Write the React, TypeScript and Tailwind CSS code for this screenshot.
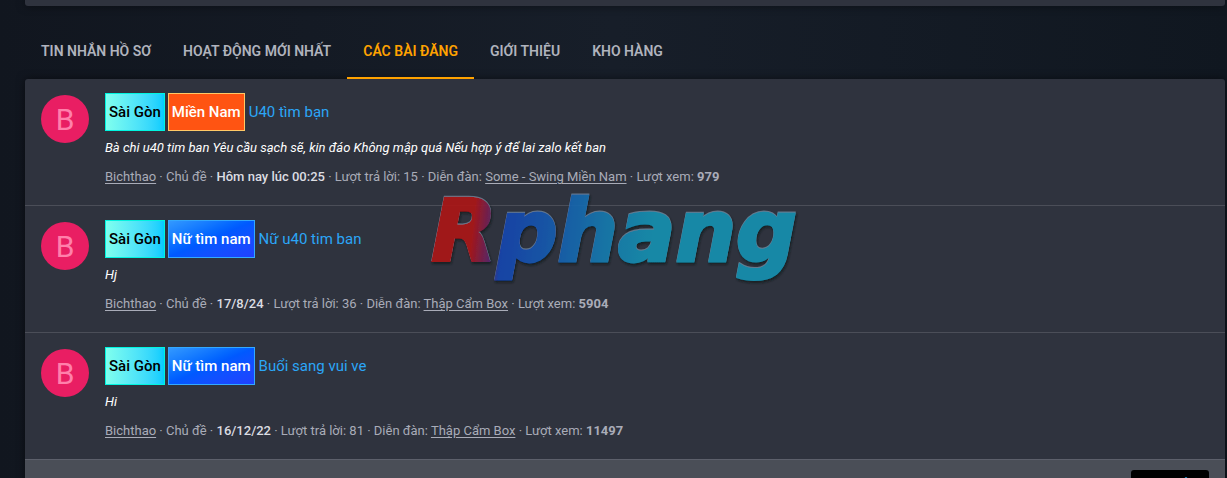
import { ChevronUp } from "lucide-react";

const tabs = [
  { label: "Tin nhắn hồ sơ", active: false },
  { label: "Hoạt động mới nhất", active: false },
  { label: "Các bài đăng", active: true },
  { label: "Giới thiệu", active: false },
  { label: "Kho hàng", active: false },
];

const prefixMap: Record<string, string> = {
  "Sài Gòn": "border-[#00f5e0] bg-linear-to-r from-[#7fffee] to-[#00ccff] text-black",
  "Miền Nam": "border-[#ffc966] bg-[#ff5412] text-white",
  "Nữ tìm nam": "border-[#33a9ff] bg-linear-to-br from-[#3399ff] via-[#0059ff] to-[#2040ff] text-white",
};

const posts = [
  {
    prefixes: ["Sài Gòn", "Miền Nam"],
    title: "U40 tìm bạn",
    snippet: "Bà chi u40 tim ban Yêu cầu sạch sẽ, kin đáo Không mập quá Nếu hợp ý để lai zalo kết ban",
    date: "Hôm nay lúc 00:25",
    replies: 15,
    forum: "Some - Swing Miền Nam",
    views: 979,
  },
  {
    prefixes: ["Sài Gòn", "Nữ tìm nam"],
    title: "Nữ u40 tim ban",
    snippet: "Hj",
    date: "17/8/24",
    replies: 36,
    forum: "Thập Cẩm Box",
    views: 5904,
  },
  {
    prefixes: ["Sài Gòn", "Nữ tìm nam"],
    title: "Buổi sang vui ve",
    snippet: "Hi",
    date: "16/12/22",
    replies: 81,
    forum: "Thập Cẩm Box",
    views: 11497,
  },
];

function Watermark() {
  return (
    <div className="fixed inset-0 flex items-center justify-center pointer-events-none">
      <svg width="400" height="160" viewBox="0 0 400 160" role="img" aria-label="Rphang" className="opacity-90">
        <defs>
          <linearGradient id="brand" gradientUnits="userSpaceOnUse" x1="10" y1="60" x2="390" y2="100">
            <stop offset="0.13" stopColor="#ad1519" />
            <stop offset="0.18" stopColor="#5f2468" />
            <stop offset="0.21" stopColor="#1545b0" />
            <stop offset="0.36" stopColor="#1560b0" />
            <stop offset="0.5" stopColor="#1480b0" />
            <stop offset="0.6" stopColor="#1592b2" />
          </linearGradient>
          <filter id="bevel" x="-5%" y="-10%" width="110%" height="125%">
            <feDropShadow dx="0" dy="-1" stdDeviation="0" floodColor="#7793a8" floodOpacity="0.8" />
            <feDropShadow dx="1" dy="2" stdDeviation="1" floodColor="#10141c" floodOpacity="0.8" />
          </filter>
        </defs>
        <text
          x="200"
          y="102"
          fontFamily="'DejaVu Sans', sans-serif"
          fontWeight="700"
          fontStyle="italic"
          fontSize="85"
          textAnchor="middle"
          fill="url(#brand)"
          stroke="url(#brand)"
          strokeWidth="3"
          filter="url(#bevel)"
        >
          Rphang
        </text>
      </svg>
    </div>
  );
}

function PostRow({ post }: { post: (typeof posts)[number] }) {
  return (
    <li className="flex gap-4 px-4 pt-3.5 pb-[18px] border-b border-[#4b4e58] last:border-[#5d606b]">
      <a href="#bichthao" className="flex items-center justify-center shrink-0 w-12 h-12 mt-0.5 rounded-full bg-[#e91e63] text-[#ff80ab] text-[30px]">
        B
      </a>
      <div className="min-w-0">
        <h3 className="flex flex-wrap items-center text-[15px] leading-5">
          {post.prefixes.map((prefix) => (
            <span key={prefix} className={`mr-[3px] px-[3px] py-2 border font-medium ${prefixMap[prefix]}`}>
              {prefix}
            </span>
          ))}
          <a href="#post" className="text-[#2ba6f7] hover:underline ml-px">{post.title}</a>
        </h3>
        <p className="mt-[7px] italic text-white leading-5">{post.snippet}</p>
        <div className="mt-[9px] leading-5 text-[#a9acb8]">
          <a href="#bichthao" className="underline underline-offset-2">Bichthao</a>
          {" · Chủ đề · "}
          <time className="font-medium text-[#dcdde2]">{post.date}</time>
          {` · Lượt trả lời: ${post.replies} · Diễn đàn: `}
          <a href="#forum" className="underline underline-offset-2">{post.forum}</a>
          {" · Lượt xem: "}
          <b>{post.views}</b>
        </div>
      </div>
    </li>
  );
}

export default function App() {
  return (
    <div className="h-screen overflow-hidden pl-[25px] pr-0.5 bg-linear-to-r from-[#11161f] via-[#171e29] to-[#101720] font-[Roboto,sans-serif] text-[13px]">
      {/* bottom edge of the profile header card */}
      <div className="h-1.5 rounded-b-[3px] bg-[#2f333e] shadow-[0_0_8px_rgba(0,0,0,0.5)]" />

      <nav className="flex pt-[17px]">
        {tabs.map((tab) => (
          <a
            key={tab.label}
            href="#tab"
            className={`px-4 pt-[18px] pb-4 border-b-2 text-sm leading-5 font-semibold uppercase ${tab.active ? "border-[#ffa200] text-[#ffa200]" : "border-transparent text-[#b0b3bd]"}`}
          >
            {tab.label}
          </a>
        ))}
      </nav>

      <main className="rounded-[3px] bg-[#2f333e] shadow-[0_0_8px_rgba(0,0,0,0.5)]">
        <ul>
          {posts.map((post) => (
            <PostRow key={post.title} post={post} />
          ))}
        </ul>
        <div className="flex justify-end px-4 py-2.5 bg-[#4a4e57]">
          <button type="button" aria-label="Lên đầu trang" className="flex justify-center w-[78px] pt-0.5 pb-2 pl-8 rounded-[3px] bg-black text-[#2196d3]">
            <ChevronUp size={16} strokeWidth={3} />
          </button>
        </div>
      </main>

      <Watermark />
    </div>
  );
}
